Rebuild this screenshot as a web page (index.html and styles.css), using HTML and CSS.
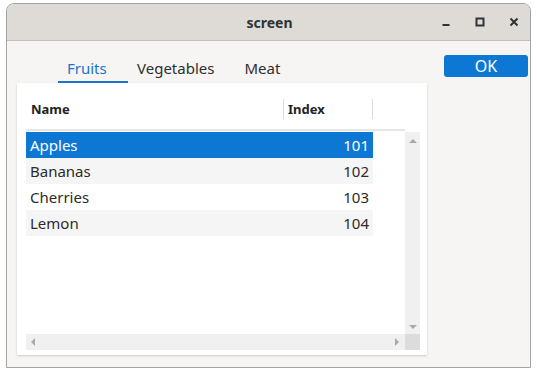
FILE: index.html
```html
<!DOCTYPE html>
<html>
<head>
<meta charset="utf-8">
<link rel="stylesheet" href="styles.css">
</head>
<body>
<div class="window">
  <div class="titlebar">
    <div class="title">screen</div>
    <div class="controls">
      <span class="ctl min"><svg width="10" height="10" viewBox="0 0 10 10"><rect x="1.5" y="7" width="7" height="2" fill="#2e3436"/></svg></span>
      <span class="ctl max"><svg width="10" height="10" viewBox="0 0 10 10"><rect x="1.5" y="1.5" width="7" height="7" fill="none" stroke="#2e3436" stroke-width="2"/></svg></span>
      <span class="ctl close"><svg width="10" height="10" viewBox="0 0 10 10"><path d="M1.5 1.5 L8.5 8.5 M8.5 1.5 L1.5 8.5" stroke="#2e3436" stroke-width="2"/></svg></span>
    </div>
  </div>
  <div class="content">
    <div class="left">
      <div class="tabs">
        <div class="tab active">Fruits</div>
        <div class="tab">Vegetables</div>
        <div class="tab meat">Meat</div>
      </div>
      <div class="panel">
        <div class="header">
          <div class="hcell name">Name</div>
          <div class="hcell index">Index</div>
          <div class="hcell rest"></div>
        </div>
        <div class="body">
          <div class="rows">
            <div class="row selected"><span>Apples</span><span>101</span></div>
            <div class="row alt"><span>Bananas</span><span>102</span></div>
            <div class="row"><span>Cherries</span><span>103</span></div>
            <div class="row alt"><span>Lemon</span><span>104</span></div>
          </div>
          <div class="vscroll">
            <svg width="8" height="6" viewBox="0 0 8 6"><path d="M0 5 L4 1 L8 5 Z" fill="#a9a9a9"/></svg>
            <svg width="8" height="6" viewBox="0 0 8 6"><path d="M0 1 L4 5 L8 1 Z" fill="#a9a9a9"/></svg>
          </div>
          <div class="hscroll">
            <svg width="6" height="8" viewBox="0 0 6 8"><path d="M5 0 L1 4 L5 8 Z" fill="#a9a9a9"/></svg>
            <svg width="6" height="8" viewBox="0 0 6 8"><path d="M1 0 L5 4 L1 8 Z" fill="#a9a9a9"/></svg>
          </div>
          <div class="corner"></div>
        </div>
      </div>
    </div>
    <div class="right">
      <button class="ok">OK</button>
    </div>
  </div>
</div>
</body>
</html>
```

FILE: styles.css
```css
html, body {
  margin: 0;
  padding: 0;
  background: #ffffff;
  font-family: "Noto Sans", "DejaVu Sans", sans-serif;
}

.window {
  margin: 3px 0 0 6px;
  width: 523px;
  height: 363px;
  border: 1px solid #a3a3a3;
  border-radius: 8px 8px 0 0;
  background: #f6f5f4;
  overflow: hidden;
  display: flex;
  flex-direction: column;
}

.titlebar {
  position: relative;
  height: 36px;
  flex: none;
  background: #dedbd7;
  border-bottom: 1px solid #c4c1bc;
  display: flex;
  align-items: center;
  justify-content: center;
}

.title {
  font-size: 14px;
  font-weight: 700;
  color: #2e3436;
  margin-left: 2px;
}

.controls {
  position: absolute;
  right: -1px;
  top: 0;
  height: 36px;
  display: flex;
  align-items: center;
}

.ctl {
  width: 34px;
  display: flex;
  justify-content: center;
  align-items: center;
}

.ctl svg { display: block; }

.content {
  display: flex;
  padding: 14px 0 0 10px;
  gap: 17px;
}

.left {
  width: 410px;
  display: flex;
  flex-direction: column;
}

.tabs {
  display: flex;
  padding-left: 41px;
  height: 28px;
}

.tab {
  font-size: 15px;
  color: #2e2e2e;
  padding: 0 9px;
  line-height: 26px;
  box-sizing: border-box;
  border-bottom: 2px solid transparent;
}

.tab.active {
  color: #1a74c9;
  border-bottom-color: #1a74c9;
  width: 70px;
}

.tab.meat { margin-left: 12px; }

.panel {
  height: 267px;
  background: #ffffff;
  box-shadow: 0 1px 2px rgba(0, 0, 0, 0.18);
  padding: 0 7px 5px 9px;
  display: flex;
  flex-direction: column;
}

.header {
  height: 48px;
  display: flex;
  align-items: center;
  border-bottom: 2px solid #e6e6e6;
  width: 379px;
  padding-top: 6px;
  box-sizing: border-box;
}

.hcell {
  font-size: 13px;
  font-weight: 700;
  color: #222;
  height: 20px;
  line-height: 20px;
  box-sizing: border-box;
}

.hcell.name { width: 257px; padding-left: 5px; }
.hcell.index { width: 89px; padding-left: 4px; border-left: 1px solid #dcdcdc; }
.hcell.rest { width: 33px; border-left: 1px solid #dcdcdc; }

.body {
  flex: 1;
  display: grid;
  grid-template-columns: 379px 15px;
  grid-template-rows: 1fr 16px;
  margin-top: 1px;
}

.rows {
  display: flex;
  flex-direction: column;
}

.row {
  width: 347px;
  height: 26px;
  display: flex;
  justify-content: space-between;
  align-items: center;
  padding: 0 4px;
  box-sizing: border-box;
  font-size: 15px;
  color: #2b2b2b;
}

.row.alt { background: #f5f5f5; }
.row.selected { background: #0c78d3; color: #ffffff; }

.vscroll {
  background: #f0f0f0;
  display: flex;
  flex-direction: column;
  justify-content: space-between;
  align-items: center;
  padding: 6px 0 4px;
}

.hscroll {
  background: #f0f0f0;
  display: flex;
  justify-content: space-between;
  align-items: center;
  padding: 0 5px 0 4px;
}

.corner { background: #dcdcdc; }

.right {
  display: flex;
  flex-direction: column;
}

.ok {
  width: 84px;
  height: 22px;
  border: none;
  border-radius: 3px;
  background: #0c78d3;
  color: #ffffff;
  font-family: "Noto Sans", sans-serif;
  font-size: 16px;
  line-height: 22px;
  padding: 0;
}
```
